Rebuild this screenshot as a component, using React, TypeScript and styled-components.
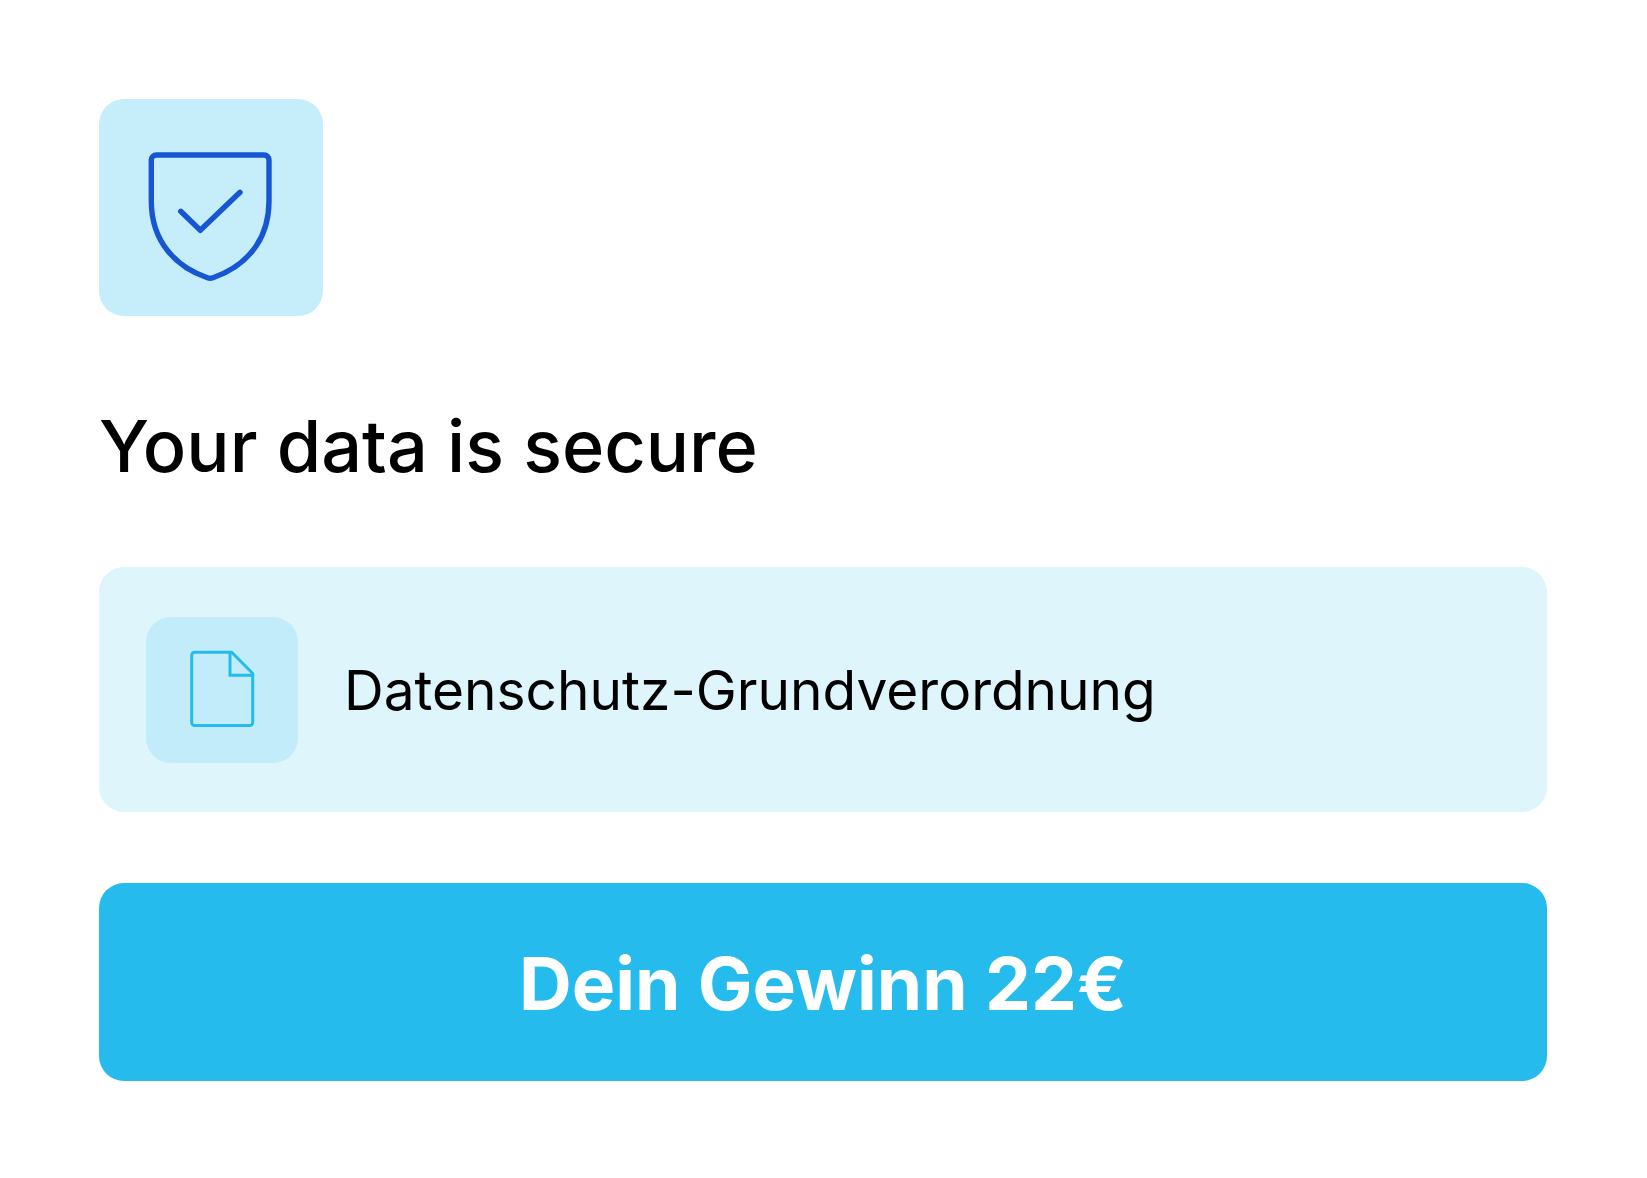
import React from 'react';
import styled, { createGlobalStyle } from 'styled-components';

const GlobalStyle = createGlobalStyle`
  *, *::before, *::after {
    box-sizing: border-box;
  }
  body {
    margin: 0;
    background: #ffffff;
    color: #000000;
    font-family: Inter, 'Open Sans', sans-serif;
  }
`;

const Page = styled.main`
  display: flex;
  flex-direction: column;
  align-items: stretch;
  padding: 99px 100px 96px 99px;
`;

const IconTile = styled.div<{ $size: 'large' | 'small' }>`
  display: flex;
  flex: none;
  align-items: center;
  justify-content: center;
  width: ${({ $size }) => ($size === 'large' ? 224 : 152)}px;
  height: ${({ $size }) => ($size === 'large' ? 217 : 146)}px;
  border-radius: 25px;
  background: ${({ $size }) => ($size === 'large' ? '#c5edfa' : '#c2ecfa')};
`;

const Icon = styled.svg`
  display: block;
  flex: none;
  fill: none;
  stroke-linecap: round;
  stroke-linejoin: round;
`;

const Title = styled.h1`
  margin: 84px 0 76px;
  font-size: 72px;
  font-weight: 500;
  line-height: 91px;
`;

const PolicyCard = styled.section`
  display: flex;
  align-items: center;
  gap: 46px;
  min-height: 245px;
  padding: 48px 47px;
  border-radius: 25px;
  background: #def5fb;
`;

const PolicyName = styled.p`
  margin: 0;
  font-size: 55px;
  font-weight: 400;
  line-height: 72px;
`;

const RewardButton = styled.button`
  margin: 71px 0 0;
  padding: 55px 48px 52px;
  border: 0;
  border-radius: 25px;
  background: #26bbed;
  color: #ffffff;
  font-family: inherit;
  font-size: 73px;
  font-weight: 700;
  line-height: 91px;
  cursor: pointer;
`;

function ShieldIcon() {
  return (
    <Icon width="160" height="160" viewBox="0 0 160 160" stroke="#1756d3" strokeWidth="5.4" aria-hidden="true">
      <path d="M25.5 27H133a5 5 0 0 1 5 5V73c0 42-26 66.500-56 76.700q-2.800 1-5.600 0C46.300 139.500 20.300 115 20.300 73V32a5 5 0 0 1 5.200-5Z" />
      <path d="M49.700 83.300 69.300 102.300 109 64.300" />
    </Icon>
  );
}

function DocumentIcon() {
  return (
    <Icon width="100" height="100" viewBox="0 0 100 100" stroke="#26bbed" strokeWidth="3" aria-hidden="true">
      <path d="M22.700 12.300H59.700L80.700 33.500V82.600a3 3 0 0 1-3 3h-55a3 3 0 0 1-3-3V15.300a3 3 0 0 1 3-3Z" />
      <path d="M58 12.300V35.300H80.700" strokeLinejoin="miter" />
    </Icon>
  );
}

export default function App() {
  return (
    <>
      <GlobalStyle />
      <Page>
        <IconTile $size="large">
          <ShieldIcon />
        </IconTile>
        <Title>Your data is secure</Title>
        <PolicyCard>
          <IconTile $size="small">
            <DocumentIcon />
          </IconTile>
          <PolicyName>Datenschutz-Grundverordnung</PolicyName>
        </PolicyCard>
        <RewardButton type="button">Dein Gewinn 22€</RewardButton>
      </Page>
    </>
  );
}
